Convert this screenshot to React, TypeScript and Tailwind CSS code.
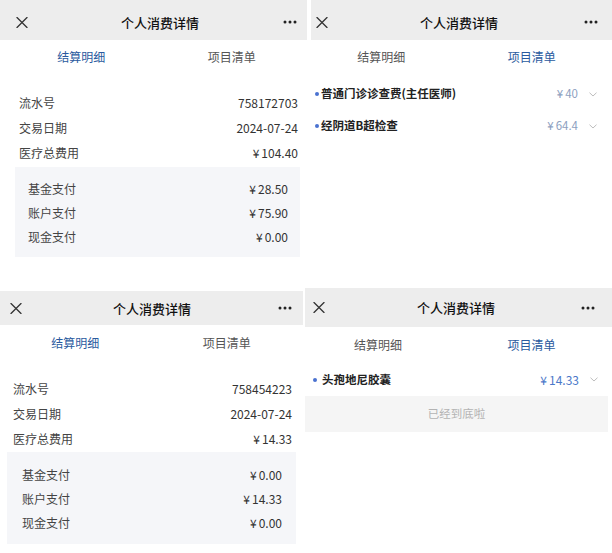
import React from "react";

const FONT = "font-['Noto_Sans_CJK_SC','Noto_Sans',sans-serif]";

function XIcon() {
  return (
    <svg width="12" height="11" viewBox="0 0 12 11">
      <path d="M1 0.5 L11 10.5 M11 0.5 L1 10.5" stroke="#333" strokeWidth="1.3" fill="none" strokeLinecap="round" />
    </svg>
  );
}

function Dots() {
  return (
    <svg width="14" height="4" viewBox="0 0 14 4">
      <circle cx="2" cy="2" r="1.5" fill="#222" />
      <circle cx="7" cy="2" r="1.5" fill="#222" />
      <circle cx="12" cy="2" r="1.5" fill="#222" />
    </svg>
  );
}

function Chevron() {
  return (
    <svg width="8" height="5" viewBox="0 0 8 5">
      <path d="M0.5 0.7 L4 4 L7.5 0.7" stroke="#b5b5b5" strokeWidth="0.9" fill="none" />
    </svg>
  );
}

function Header({ cls, xCls, titleCls, dotsCls }: { cls: string; xCls: string; titleCls: string; dotsCls: string }) {
  return (
    <div className={`flex items-center bg-[#ededed] ${cls}`}>
      <div className={`flex ${xCls}`}>
        <XIcon />
      </div>
      <div className={`text-[13px] font-medium text-[#111] leading-none ${titleCls}`}>个人消费详情</div>
      <div className={`ml-auto flex ${dotsCls}`}>
        <Dots />
      </div>
    </div>
  );
}

function Tabs({ cls, w1, w2, active }: { cls: string; w1: string; w2: string; active: number }) {
  return (
    <div className={`flex items-center text-[12px] ${cls}`}>
      <div className={`text-center ${w1} ${active === 0 ? "text-[#2a5a9e]" : "text-[#555]"}`}>结算明细</div>
      <div className={`text-center ${w2} ${active === 1 ? "text-[#2a5a9e]" : "text-[#555]"}`}>项目清单</div>
    </div>
  );
}

function Money({ v }: { v: string }) {
  return (
    <span>
      ¥<span className="ml-[2px]">{v}</span>
    </span>
  );
}

function Row({ label, value, cls }: { label: string; value: React.ReactNode; cls: string }) {
  return (
    <div className={`flex items-center justify-between text-[12px] ${cls}`}>
      <span className="text-[#444]">{label}</span>
      <span className="text-[#333]">{value}</span>
    </div>
  );
}

function Item({ name, value, cls, dotCls, valCls }: { name: string; value: string; cls: string; dotCls: string; valCls: string }) {
  return (
    <div className={`flex items-center text-[11.5px] ${cls}`}>
      <div className={`w-[4px] h-[4px] rounded-full bg-[#4a72d0] ${dotCls}`} />
      <span className="font-bold text-[#222]">{name}</span>
      <span className={`ml-auto ${valCls}`}>
        <Money v={value} />
      </span>
      <div className="flex ml-[11px]">
        <Chevron />
      </div>
    </div>
  );
}

export default function App() {
  return (
    <div className={`w-[612px] h-[553px] bg-white overflow-hidden flex flex-col ${FONT}`}>
      {/* Top row */}
      <div className="flex h-[287px]">
        {/* Top-left */}
        <div className="w-[307px] flex flex-col">
          <Header cls="h-[40px] pt-[4px]" xCls="ml-[16px]" titleCls="ml-[93px]" dotsCls="mr-[10px]" />
          <Tabs cls="h-[34px] ml-[6px]" w1="w-[153px]" w2="w-[153px]" active={0} />
          <Row cls="h-[25px] mt-[16px] ml-[19px] mr-[9px]" label="流水号" value="758172703" />
          <Row cls="h-[25px] ml-[19px] mr-[9px]" label="交易日期" value="2024-07-24" />
          <Row cls="h-[25px] ml-[19px] mr-[9px]" label="医疗总费用" value={<Money v="104.40" />} />
          <div className="mt-[2px] ml-[15px] w-[285px] h-[90px] bg-[#f5f6f9] pt-[10px] pl-[13px] pr-[12px]">
            <Row cls="h-[24px]" label="基金支付" value={<Money v="28.50" />} />
            <Row cls="h-[24px]" label="账户支付" value={<Money v="75.90" />} />
            <Row cls="h-[24px]" label="现金支付" value={<Money v="0.00" />} />
          </div>
        </div>
        {/* Top-right */}
        <div className="w-[301px] ml-[4px] flex flex-col">
          <Header cls="h-[40px] pt-[4px]" xCls="ml-[5px]" titleCls="ml-[92px]" dotsCls="mr-[14px]" />
          <Tabs cls="h-[34px]" w1="w-[143px]" w2="w-[163px]" active={1} />
          <Item cls="h-[32px] mt-[4px] pr-[15px]" dotCls="ml-[4px] mr-[2px]" valCls="text-[#8d9fbf]" name="普通门诊诊查费(主任医师)" value="40" />
          <Item cls="h-[32px] pr-[15px]" dotCls="ml-[4px] mr-[2px]" valCls="text-[#8d9fbf]" name="经阴道B超检查" value="64.4" />
        </div>
      </div>
      {/* Bottom row */}
      <div className="flex flex-1">
        {/* Bottom-left */}
        <div className="w-[303px] flex flex-col">
          <Header cls="h-[34px] mt-[4px]" xCls="ml-[10px]" titleCls="ml-[91px]" dotsCls="mr-[11px]" />
          <Tabs cls="h-[36px]" w1="w-[151px]" w2="w-[153px]" active={0} />
          <Row cls="h-[25px] mt-[15px] ml-[13px] mr-[11px]" label="流水号" value="758454223" />
          <Row cls="h-[25px] ml-[13px] mr-[11px]" label="交易日期" value="2024-07-24" />
          <Row cls="h-[25px] ml-[13px] mr-[11px]" label="医疗总费用" value={<Money v="14.33" />} />
          <div className="mt-[1px] ml-[7px] w-[289px] h-[92px] bg-[#f5f6f9] pt-[11px] pl-[15px] pr-[14px]">
            <Row cls="h-[24px]" label="基金支付" value={<Money v="0.00" />} />
            <Row cls="h-[24px]" label="账户支付" value={<Money v="14.33" />} />
            <Row cls="h-[24px]" label="现金支付" value={<Money v="0.00" />} />
          </div>
        </div>
        {/* Bottom-right */}
        <div className="w-[307px] ml-[2px] flex flex-col">
          <Header cls="h-[39px] mt-[1px]" xCls="ml-[8px]" titleCls="ml-[92px]" dotsCls="mr-[17px]" />
          <Tabs cls="h-[36px]" w1="w-[146px]" w2="w-[161px]" active={1} />
          <Item cls="h-[33px] pr-[14px]" dotCls="ml-[8px] mr-[5px]" valCls="text-[#4b78c9] text-[12px]" name="头孢地尼胶囊" value="14.33" />
          <div className="h-[36px] w-[303px] bg-[#f5f5f5] flex items-center justify-center text-[11.5px] text-[#b3b3b3]">
            已经到底啦
          </div>
        </div>
      </div>
    </div>
  );
}
